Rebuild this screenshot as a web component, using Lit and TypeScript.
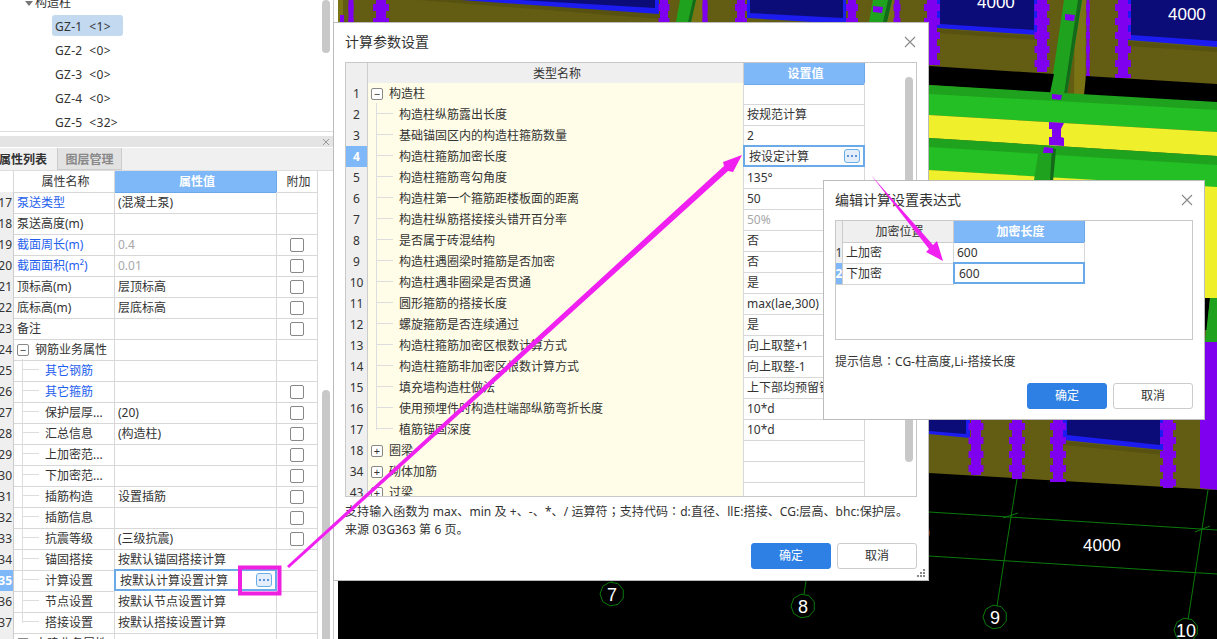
import { LitElement, html, svg, css } from 'lit';
import { customElement } from 'lit/decorators.js';

const OLIVE = '#635d14';
const OLIVE_DARK = '#575210';
const OLIVE_LIGHT = '#7a7414';
const NAVY = '#0c0c78';
const BLUE = '#1c1cf0';
const PURPLE = '#7f00ee';
const GREEN = '#24bf24';
const GREEN_DARK = '#1fa31f';
const GREEN_DEEP = '#14691a';
const YELLOW = '#efef2c';
const LINE = '#0a7a0a';

// polygons of the 3d view, in page coordinates
const SHAPES: [string, string][] = [
  [OLIVE, '338,0 1217,0 1217,490 338,470'],
  [OLIVE_LIGHT, '338,0 343,0 343,22 338,22'],
  [PURPLE, '340,15 344,15 344,22 340,22'],
  [OLIVE_DARK, '419,0 660,0 660,19'],
  [BLUE, '461,0 659,0 659,14'],
  [NAVY, '520,0 655,0 655,8'],
  [BLUE, '747,0 846,0 846,24 747,18'],
  [NAVY, '750,0 843,0 843,18 750,13'],
  [OLIVE_LIGHT, '692,0 703,0 703,22 688,22'],
  [GREEN_DARK, '680,0 696,0 691,22 676,22'],
  [GREEN_DEEP, '693,0 696,0 691,22 688,22'],
  [OLIVE_LIGHT, '888,0 894,0 894,22 884,22'],
  [GREEN_DARK, '873,0 892,0 887,22 869,22'],
  [GREEN_DEEP, '888,0 892,0 887,22 883,22'],
  [PURPLE, '873,6 883,7 882,13 873,12'],
  // top right windows
  [BLUE, '937,0 1037,0 1037,35 937,28'],
  [NAVY, '940,0 1034,0 1034,30 940,24'],
  [BLUE, '1128,0 1217,0 1217,47 1128,40'],
  [NAVY, '1131,0 1217,0 1217,41 1131,35'],
  [OLIVE_DARK, '937,29 1037,36 1037,40 937,33'],
  [OLIVE_DARK, '1128,41 1217,48 1217,52 1128,46'],
  // the beam at the top right
  [OLIVE_LIGHT, '1075,0 1086,0 1085,94 1074,94'],
  [GREEN_DARK, '1064,0 1082,0 1067,94 1050,94'],
  [GREEN_DEEP, '1078,0 1082,0 1067,94 1064,94'],
  [PURPLE, '1065,14 1075,15 1074,21 1065,20'],
  // bands
  ['#000', '929,66 1054,74 1050,93 929,85'],
  ['#000', '1086,76 1217,84 1217,103 1084,95'],
  [GREEN_DARK, '929,85 1217,102 1217,112 929,95'],
  [GREEN, '929,94 1217,110 1217,132 929,115'],
  [YELLOW, '929,115 1217,132 1217,156 929,138'],
  [GREEN_DARK, '929,138 1217,156 1217,166 929,148'],
  [GREEN, '929,147 1217,165 1217,188 929,170'],
  [YELLOW, '929,170 1217,187 1217,298 1205,298 929,260'],
  ['#000', '1205,298 1210,298 1207,330 1205,330'],
  [GREEN_DARK, '1210,298 1217,298 1217,342 1205,342'],
  [PURPLE, '1205,342 1217,342 1217,490 1200,488 1200,419'],
  [GREEN_DARK, '1039,148 1056,149 1053,180 1034,180'],
  [GREEN_DEEP, '1052,148 1056,149 1053,180 1050,180'],
  [PURPLE, '1049,122 1064,123 1061,129 1061,137 1064,138 1064,146 1049,145 1049,137 1052,137 1052,129 1049,129'],
  [PURPLE, '1052,94 1062,95 1061,100 1052,99'],
  [PURPLE, '1044,147 1053,148 1053,153 1043,153'],
  // lower windows
  [BLUE, '929,419 970,419 970,438 929,434'],
  [NAVY, '929,419 966,419 966,434 929,431'],
  [BLUE, '1063,419 1163,419 1163,450 1063,440'],
  [NAVY, '1067,419 1160,419 1160,445 1067,435'],
  [OLIVE_DARK, '1063,441 1163,451 1163,455 1063,445'],
  // black floor
  ['#000', '338,470 929,473 1217,490 1217,639 338,639'],
];

// crenellated purple columns: centre x, top, bottom, shaft width, bump width
const COLUMNS: [number, number, number, number, number][] = [
  [351, 0, 22, 5, 5], [381, 0, 22, 10, 16], [664, 0, 22, 8, 11], [705, 0, 22, 5, 5], [741, 0, 22, 8, 12],
  [852, 0, 22, 8, 12], [897, 0, 22, 5, 7],
  [932, 0, 65, 10, 16], [1042, 0, 72, 10, 15], [1088, 0, 76, 3, 4], [1123, 0, 78, 10, 16],
  [976, 419, 475, 10, 15], [1017, 419, 479, 10, 16], [1058, 419, 482, 10, 16], [1168, 419, 488, 10, 16],
];

const GRID_LINES = [
  [929, 512, 1217, 530], [929, 556, 1217, 574], [1017, 479, 997, 606], [1208, 490, 1188, 620],
  [1003, 518, 1018, 513], [1195, 532, 1210, 526], [806, 581, 804, 594], [612, 581, 612, 583],
];

const AXES: [number, number, string][] = [
  [612, 594, '7'], [803, 606, '8'], [995, 617, '9'], [1186, 630, '10'],
];

const LABELS: [number, number][] = [[997, 8], [1188, 20], [1103, 551], [912, 539]];

const octagon = (cx: number, cy: number, r: number) =>
  Array.from({ length: 9 }, (_, i) => {
    const a = ((i + 0.5) * Math.PI) / 4.5;
    return `${cx + r * Math.cos(a)},${cy + r * Math.sin(a)}`;
  }).join(' ');

type PropRow = { n: number; name: string; val?: string; check?: boolean; blue?: boolean; gray?: boolean; child?: boolean; last?: boolean; group?: string };

const PROPS: PropRow[] = [
  { n: 17, name: '泵送类型', val: '(混凝土泵)', blue: true },
  { n: 18, name: '泵送高度(m)' },
  { n: 19, name: '截面周长(m)', val: '0.4', gray: true, check: true, blue: true },
  { n: 20, name: '截面面积(m²)', val: '0.01', gray: true, check: true, blue: true },
  { n: 21, name: '顶标高(m)', val: '层顶标高', check: true },
  { n: 22, name: '底标高(m)', val: '层底标高', check: true },
  { n: 23, name: '备注', check: true },
  { n: 24, name: '钢筋业务属性', group: '−' },
  { n: 25, name: '其它钢筋', blue: true, child: true },
  { n: 26, name: '其它箍筋', blue: true, child: true, check: true },
  { n: 27, name: '保护层厚...', val: '(20)', child: true, check: true },
  { n: 28, name: '汇总信息', val: '(构造柱)', child: true, check: true },
  { n: 29, name: '上加密范...', child: true, check: true },
  { n: 30, name: '下加密范...', child: true, check: true },
  { n: 31, name: '插筋构造', val: '设置插筋', child: true, check: true },
  { n: 32, name: '插筋信息', child: true, check: true },
  { n: 33, name: '抗震等级', val: '(三级抗震)', child: true, check: true },
  { n: 34, name: '锚固搭接', val: '按默认锚固搭接计算', child: true },
  { n: 35, name: '计算设置', val: '按默认计算设置计算', child: true },
  { n: 36, name: '节点设置', val: '按默认节点设置计算', child: true },
  { n: 37, name: '搭接设置', val: '按默认搭接设置计算', child: true, last: true },
  { n: 38, name: '土建业务属性', group: '+' },
];

const PARAMS: PropRow[] = [
  { n: 1, name: '构造柱', group: '−' },
  { n: 2, name: '构造柱纵筋露出长度', val: '按规范计算', child: true },
  { n: 3, name: '基础锚固区内的构造柱箍筋数量', val: '2', child: true },
  { n: 4, name: '构造柱箍筋加密长度', val: '按设定计算', child: true },
  { n: 5, name: '构造柱箍筋弯勾角度', val: '135°', child: true },
  { n: 6, name: '构造柱第一个箍筋距楼板面的距离', val: '50', child: true },
  { n: 7, name: '构造柱纵筋搭接接头错开百分率', val: '50%', gray: true, child: true },
  { n: 8, name: '是否属于砖混结构', val: '否', child: true },
  { n: 9, name: '构造柱遇圈梁时箍筋是否加密', val: '否', child: true },
  { n: 10, name: '构造柱遇非圈梁是否贯通', val: '是', child: true },
  { n: 11, name: '圆形箍筋的搭接长度', val: 'max(lae,300)', child: true },
  { n: 12, name: '螺旋箍筋是否连续通过', val: '是', child: true },
  { n: 13, name: '构造柱箍筋加密区根数计算方式', val: '向上取整+1', child: true },
  { n: 14, name: '构造柱箍筋非加密区根数计算方式', val: '向上取整-1', child: true },
  { n: 15, name: '填充墙构造柱做法', val: '上下部均预留钢筋', child: true },
  { n: 16, name: '使用预埋件时构造柱端部纵筋弯折长度', val: '10*d', child: true },
  { n: 17, name: '植筋锚固深度', val: '10*d', child: true, last: true },
  { n: 18, name: '圈梁', group: '+' },
  { n: 34, name: '砌体加筋', group: '+' },
  { n: 43, name: '过梁', group: '+' },
];

@customElement('app-root')
export class AppRoot extends LitElement {
  static styles = css`
    :host {
      display: flex;
      position: relative;
      width: 1217px;
      height: 639px;
      overflow: hidden;
      background: #fff;
      color: #333;
      font: 12px/20px 'Noto Sans', 'Noto Sans CJK SC', sans-serif;
    }
    * {
      box-sizing: border-box;
    }
    .side {
      position: relative;
      flex: none;
      width: 334px;
      height: 639px;
      overflow: hidden;
      border-right: 1px solid #ccc;
    }
    .tree {
      height: 132px;
      overflow: hidden;
      border-bottom: 1px solid #ddd;
    }
    .tree-root {
      display: flex;
      align-items: center;
      gap: 2px;
      height: 24px;
      margin-top: -9px;
      padding-left: 25px;
    }
    .tri {
      width: 0;
      height: 0;
      border: 4px solid transparent;
      border-top: 5px solid #777;
      border-bottom: 0;
    }
    .tree-item {
      display: flex;
      align-items: center;
      width: 71px;
      height: 21px;
      margin: 0 0 3px 52px;
      padding: 2px 0 0 3px;
      border-radius: 3px;
      letter-spacing: 0.3px;
      white-space: pre;
    }
    .tree-item.on {
      background: #c2d9f0;
    }
    .bar {
      display: flex;
      justify-content: flex-end;
      align-items: center;
      height: 11px;
      margin-top: 4px;
      margin-bottom: 1px;
      padding-right: 3px;
      background: #e4e4e4;
    }
    .tabs {
      display: flex;
      height: 23px;
      background: #f0f0f0;
      border-bottom: 1px solid #ddd;
      font-weight: 700;
      line-height: 24px;
    }
    .tab {
      width: 57px;
      margin-left: -1px;
    }
    .tab.off {
      width: 65px;
      margin-left: 1px;
      text-align: center;
      background: #e2e2e2;
      border: 1px solid #ccc;
      border-width: 0 1px 1px;
      color: #888;
    }
    .row {
      display: grid;
      height: 21px;
    }
    .side .row {
      grid-template-columns: 14px 101px 162px 41px;
    }
    .dlg-a .row {
      grid-template-columns: 22px 376px 121px;
    }
    .dlg-b .row {
      grid-template-columns: 7px 111px 131px;
    }
    .c {
      position: relative;
      display: flex;
      align-items: center;
      min-width: 0;
      padding: 1px 0 0 3px;
      border: solid #d8d8d8;
      border-width: 0 1px 1px 0;
      white-space: nowrap;
    }
    .num {
      justify-content: center;
      padding: 1px 0 0;
      background: #efefef;
      border-color: #ccc;
    }
    .side .num {
      justify-content: flex-end;
      padding: 1px 1px 0 0;
    }
    .num.on {
      background: #7fb8f8;
      color: #fff;
      font-weight: 700;
    }
    .head .c {
      justify-content: center;
      background: #efefef;
      border-color: #ccc;
    }
    .head .c.hot {
      background: #7fb8f8;
      color: #fff;
      font-weight: 700;
      border: 1px solid #6aa8ea;
      border-width: 0 1px 1px 0;
    }
    .head .c.plain {
      background: #fff;
      border-color: #d8d8d8;
    }
    .blue {
      color: #1f5fee;
    }
    .gray {
      color: #a8a8a8;
    }
    .yel {
      background: #fffde8;
    }
    .child {
      padding-left: 31px;
    }
    .child::before {
      content: '';
      position: absolute;
      left: 8px;
      top: -1px;
      bottom: -1px;
      width: 1px;
      background: #ddd;
    }
    .child.last::before {
      bottom: 10px;
    }
    .child::after {
      content: '';
      position: absolute;
      left: 9px;
      top: 9px;
      width: 16px;
      height: 1px;
      background: #ddd;
    }
    .box {
      display: flex;
      flex: none;
      justify-content: center;
      align-items: center;
      width: 12px;
      height: 12px;
      margin: -1px 6px 0 0;
      border: 1px solid #888;
      border-radius: 2px;
      font-size: 11px;
      line-height: 10px;
      background: #fff;
    }
    .check {
      justify-content: center;
      padding: 0;
    }
    .check i {
      width: 14px;
      height: 14px;
      border: 1px solid #888;
      border-radius: 2px;
    }
    .sel {
      justify-content: space-between;
      height: 22px;
      margin: -1px 0 0 -1px;
      padding: 1px 3px 0 4px;
      border: 2px solid #6aaae8;
    }
    .dots {
      display: flex;
      flex: none;
      justify-content: center;
      align-items: center;
      gap: 2px;
      width: 16px;
      height: 14px;
      margin-top: -1px;
      border: 1px solid #6aaee8;
      border-radius: 3px;
      background: #e4eefb;
    }
    .dots b {
      width: 2px;
      height: 2px;
      background: #2f74d0;
      border-radius: 50%;
    }
    .sb {
      position: absolute;
      left: 322px;
      width: 8px;
      background: #c8c8c8;
      border-radius: 4px;
    }
    .view {
      flex: none;
      width: 879px;
      height: 639px;
      margin-left: 4px;
    }
    .view svg {
      display: block;
    }
    .lbl {
      fill: #fff;
      font: 17px 'Liberation Sans', sans-serif;
    }
    .ax {
      fill: #fff;
      font: 18px 'Liberation Sans', sans-serif;
      text-anchor: middle;
    }
    .dlg {
      position: absolute;
      display: flex;
      flex-direction: column;
      background: #fff;
      border: 1px solid #bbb;
    }
    .dlg-a {
      left: 333px;
      top: 22px;
      width: 596px;
      height: 559px;
      padding: 0 11px;
    }
    .dlg-b {
      left: 823px;
      top: 180px;
      width: 382px;
      height: 240px;
      padding: 0 11px;
    }
    .title {
      display: flex;
      flex: none;
      justify-content: space-between;
      align-items: center;
      height: 39px;
      padding-bottom: 2px;
      font-size: 14px;
    }
    .title svg {
      margin-right: 1px;
    }
    .dlg-b .title svg {
      margin-right: 0;
    }
    .table {
      flex: none;
      position: relative;
      overflow: hidden;
      border: 1px solid #c8c8c8;
    }
    .dlg-a .table {
      width: 572px;
      height: 435px;
    }
    .dlg-a .head {
      height: 20px;
    }
    .dlg-b .table {
      width: 358px;
      height: 120px;
    }
    .dlg-a .sb {
      left: 559px;
      top: 14px;
      height: 385px;
    }
    .note {
      flex: none;
      margin-top: 6px;
      line-height: 18px;
      letter-spacing: 0.08px;
      white-space: nowrap;
    }
    .hint {
      flex: none;
      margin-top: 12px;
    }
    /* the traditional cut centres full-width colons the way the reference does */
    .mark {
      font-family: 'Noto Sans CJK TC', sans-serif;
      line-height: 0;
    }
    .btns {
      display: flex;
      justify-content: flex-end;
      gap: 6px;
      margin-top: auto;
    }
    .dlg-a .btns {
      margin-bottom: 11px;
    }
    .dlg-b .btns {
      margin-bottom: 10px;
    }
    .btn {
      width: 80px;
      height: 26px;
      line-height: 24px;
      text-align: center;
      border: 1px solid #ccc;
      border-radius: 3px;
      background: #fff;
    }
    .btn.pri {
      background: #2f80e4;
      border-color: #2f80e4;
      color: #fff;
    }
    .grip {
      position: absolute;
      right: 2px;
      bottom: 2px;
    }
    .arrows {
      position: absolute;
      left: 0;
      top: 0;
      pointer-events: none;
    }
  `;

  cross() {
    return html`<svg width="12" height="12" viewBox="0 0 12 12" fill="none" stroke="#888" stroke-width="1.1">
      <path d="M1 1 11 11M11 1 1 11" />
    </svg>`;
  }

  dots() {
    return html`<span class="dots"><b></b><b></b><b></b></span>`;
  }

  nameCell(r: PropRow, extra = '') {
    const cls = ['c', extra, r.blue ? 'blue' : '', r.child ? 'child' : '', r.last ? 'last' : ''];
    return html`<div class=${cls.join(' ')}>
      ${r.group ? html`<span class="box">${r.group}</span>` : ''}${r.name}
    </div>`;
  }

  renderProp(r: PropRow) {
    const sel = r.n === 35;
    return html`<div class="row">
      <div class="c num ${sel ? 'on' : ''}">${r.n}</div>
      ${this.nameCell(r)}
      ${sel
        ? html`<div class="c sel"><span>${r.val}</span>${this.dots()}</div>`
        : html`<div class="c ${r.gray ? 'gray' : ''}">${r.val}</div>`}
      <div class="c check">${r.check ? html`<i></i>` : ''}</div>
    </div>`;
  }

  renderParam(r: PropRow) {
    const sel = r.n === 4;
    return html`<div class="row">
      <div class="c num ${sel ? 'on' : ''}">${r.n}</div>
      ${this.nameCell(r, 'yel')}
      ${sel
        ? html`<div class="c sel"><span>${r.val}</span>${this.dots()}</div>`
        : html`<div class="c ${r.gray ? 'gray' : ''}">${r.val}</div>`}
    </div>`;
  }

  renderSide() {
    return html`<aside class="side">
      <div class="tree">
        <div class="tree-root"><span class="tri"></span>构造柱</div>
        <div class="tree-item on">GZ-1  <1></div>
        <div class="tree-item">GZ-2  <0></div>
        <div class="tree-item">GZ-3  <0></div>
        <div class="tree-item">GZ-4  <0></div>
        <div class="tree-item">GZ-5  <32></div>
      </div>
      <div class="bar">
        <svg width="8" height="8" viewBox="0 0 8 8" fill="none" stroke="#999"><path d="M1 1 7 7M7 1 1 7" /></svg>
      </div>
      <div class="tabs">
        <div class="tab">属性列表</div>
        <div class="tab off">图层管理</div>
      </div>
      <div class="row head">
        <div class="c plain"></div>
        <div class="c plain">属性名称</div>
        <div class="c hot">属性值</div>
        <div class="c plain">附加</div>
      </div>
      ${PROPS.map((r) => this.renderProp(r))}
      <div class="sb" style="top:0;height:53px"></div>
      <div class="sb" style="top:390px;height:260px"></div>
    </aside>`;
  }

  renderView() {
    const crenels = COLUMNS.map(([cx, y0, y1, shaft, bump]) => {
      const bumps = [];
      for (let y = y0 + 4; y < y1; y += 14) bumps.push(y);
      return svg`<rect x=${cx - shaft / 2} y=${y0} width=${shaft} height=${y1 - y0} fill=${PURPLE} />
        ${bumps.map((y) => svg`<rect x=${cx - bump / 2} y=${y} width=${bump} height=${Math.min(7, y1 - y)} fill=${PURPLE} />`)}`;
    });
    return html`<div class="view">
      <svg width="879" height="639" viewBox="338 0 879 639">
        ${SHAPES.map(([fill, points]) => svg`<polygon fill=${fill} points=${points} />`)}
        ${crenels}
        ${GRID_LINES.map(([x1, y1, x2, y2]) => svg`<line x1=${x1} y1=${y1} x2=${x2} y2=${y2} stroke=${LINE} />`)}
        ${LABELS.map(([x, y]) => svg`<text class="lbl" x=${x - 20} y=${y}>4000</text>`)}
        ${AXES.map(([x, y, t]) => svg`
          <polygon points=${octagon(x, y, 12)} fill="#000" stroke=${LINE} />
          <text class="ax" x=${x} y=${y + 7}>${t}</text>`)}
      </svg>
    </div>`;
  }

  renderParamsDialog() {
    return html`<section class="dlg dlg-a">
      <div class="title">计算参数设置 ${this.cross()}</div>
      <div class="table">
        <div class="row head">
          <div class="c"></div>
          <div class="c">类型名称</div>
          <div class="c hot">设置值</div>
        </div>
        ${PARAMS.map((r) => this.renderParam(r))}
        <div class="sb"></div>
      </div>
      <div class="note">
        支持输入函数为 max、min 及 +、-、*、/ 运算符<span class="mark">；</span>支持代码<span class="mark">：</span>d:直径、llE:搭接、CG:层高、bhc:保护层。<br />来源 03G363 第 6 页。
      </div>
      <div class="btns">
        <div class="btn pri">确定</div>
        <div class="btn">取消</div>
      </div>
      <svg class="grip" width="10" height="9" viewBox="0 0 10 9" fill="#888">
        <rect x="7" y="0" width="2" height="2" />
        <rect x="4" y="3" width="2" height="2" /><rect x="7" y="3" width="2" height="2" />
        <rect x="1" y="6" width="2" height="2" /><rect x="4" y="6" width="2" height="2" /><rect x="7" y="6" width="2" height="2" />
      </svg>
    </section>`;
  }

  renderExprDialog() {
    return html`<section class="dlg dlg-b">
      <div class="title">编辑计算设置表达式 ${this.cross()}</div>
      <div class="table">
        <div class="row head">
          <div class="c"></div>
          <div class="c">加密位置</div>
          <div class="c hot">加密长度</div>
        </div>
        <div class="row">
          <div class="c num">1</div>
          <div class="c">上加密</div>
          <div class="c">600</div>
        </div>
        <div class="row">
          <div class="c num on">2</div>
          <div class="c">下加密</div>
          <div class="c sel">600</div>
        </div>
      </div>
      <div class="hint">提示信息<span class="mark">：</span>CG-柱高度,Li-搭接长度</div>
      <div class="btns">
        <div class="btn pri">确定</div>
        <div class="btn">取消</div>
      </div>
    </section>`;
  }

  render() {
    return html`
      ${this.renderSide()} ${this.renderView()} ${this.renderParamsDialog()} ${this.renderExprDialog()}
      <svg class="arrows" width="1217" height="639" viewBox="0 0 1217 639">
        <polygon fill="#f020f0" points="287,566 289,568 728,171 733,172 742,155 723,162 724,166" />
        <polygon fill="#f020f0" points="871,175 929,249 926,252 943,261 937,241 933,245" />
        <rect x="240" y="567.5" width="39.5" height="26" fill="none" stroke="#f020e0" stroke-width="4" />
      </svg>
    `;
  }
}
